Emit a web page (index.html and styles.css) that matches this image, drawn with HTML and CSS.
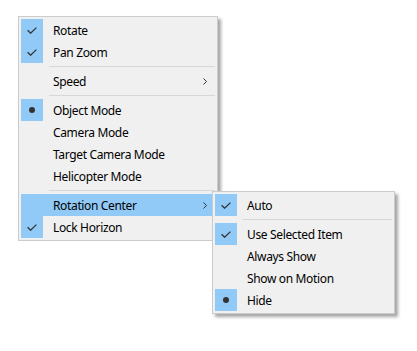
FILE: index.html
```html
<!DOCTYPE html>
<html lang="en">

<head>
    <meta charset="UTF-8">
    <title>Menu</title>
    <link rel="stylesheet" href="styles.css">
</head>

<body>
    <div class="menu main-menu">
        <div class="item">
            <span class="mark checked"><svg width="10" height="7" viewBox="0 0 10 7"><path d="M0.6 3.2 L3.6 6.2 L9.4 0.6" /></svg></span>
            <span class="label">Rotate</span>
        </div>
        <div class="item">
            <span class="mark checked"><svg width="10" height="7" viewBox="0 0 10 7"><path d="M0.6 3.2 L3.6 6.2 L9.4 0.6" /></svg></span>
            <span class="label">Pan Zoom</span>
        </div>
        <div class="separator"></div>
        <div class="item">
            <span class="mark"></span>
            <span class="label">Speed</span>
            <span class="arrow"><svg width="4" height="7" viewBox="0 0 4 7"><path d="M0.5 0.5 L3.5 3.5 L0.5 6.5" /></svg></span>
        </div>
        <div class="separator"></div>
        <div class="item">
            <span class="mark checked"><span class="dot"></span></span>
            <span class="label">Object Mode</span>
        </div>
        <div class="item">
            <span class="mark"></span>
            <span class="label">Camera Mode</span>
        </div>
        <div class="item">
            <span class="mark"></span>
            <span class="label">Target Camera Mode</span>
        </div>
        <div class="item">
            <span class="mark"></span>
            <span class="label">Helicopter Mode</span>
        </div>
        <div class="separator"></div>
        <div class="item active">
            <span class="mark"></span>
            <span class="label">Rotation Center</span>
            <span class="arrow"><svg width="4" height="7" viewBox="0 0 4 7"><path d="M0.5 0.5 L3.5 3.5 L0.5 6.5" /></svg></span>
        </div>
        <div class="item">
            <span class="mark checked"><svg width="10" height="7" viewBox="0 0 10 7"><path d="M0.6 3.2 L3.6 6.2 L9.4 0.6" /></svg></span>
            <span class="label">Lock Horizon</span>
        </div>
    </div>

    <!-- submenu of Rotation Center -->
    <div class="menu sub-menu">
        <div class="item">
            <span class="mark checked"><svg width="10" height="7" viewBox="0 0 10 7"><path d="M0.6 3.2 L3.6 6.2 L9.4 0.6" /></svg></span>
            <span class="label">Auto</span>
        </div>
        <div class="separator"></div>
        <div class="item">
            <span class="mark checked"><svg width="10" height="7" viewBox="0 0 10 7"><path d="M0.6 3.2 L3.6 6.2 L9.4 0.6" /></svg></span>
            <span class="label">Use Selected Item</span>
        </div>
        <div class="item">
            <span class="mark"></span>
            <span class="label">Always Show</span>
        </div>
        <div class="item">
            <span class="mark"></span>
            <span class="label">Show on Motion</span>
        </div>
        <div class="item">
            <span class="mark checked"><span class="dot"></span></span>
            <span class="label">Hide</span>
        </div>
    </div>
</body>

</html>
```

FILE: styles.css
```css
body {
    margin: 0;
    background: #ffffff;
    font-family: "Noto Sans", "Liberation Sans", sans-serif;
    font-size: 12px;
    letter-spacing: -0.35px;
    color: #000;
}

.menu {
    background: #f0f0f0;
    border: 1px solid #cccccc;
    padding: 2px;
    box-shadow: 3px 3px 3px rgba(0, 0, 0, 0.35);
}

.main-menu {
    width: 194px;
    margin: 16px 0 0 18px;
}

.sub-menu {
    position: absolute;
    left: 212px;
    top: 191px;
    width: 177px;
}

.item {
    display: flex;
    align-items: center;
    height: 22px;
}

.item.active {
    background: #91c9f7;
}

.mark {
    width: 22px;
    height: 22px;
    display: flex;
    align-items: center;
    justify-content: center;
    margin-right: 10px;
}

.mark.checked {
    background: #91c9f7;
}

.mark svg path {
    fill: none;
    stroke: #333;
    stroke-width: 1.3;
}

.dot {
    width: 6px;
    height: 6px;
    border-radius: 50%;
    background: #333;
}

.label {
    flex: 1;
    white-space: nowrap;
}

.arrow {
    display: flex;
    margin-right: 8px;
}

.arrow svg path {
    fill: none;
    stroke: #333;
    stroke-width: 1;
}

.separator {
    height: 1px;
    margin: 3px 0 3px 28px;
    background: #d7d7d7;
}
```
